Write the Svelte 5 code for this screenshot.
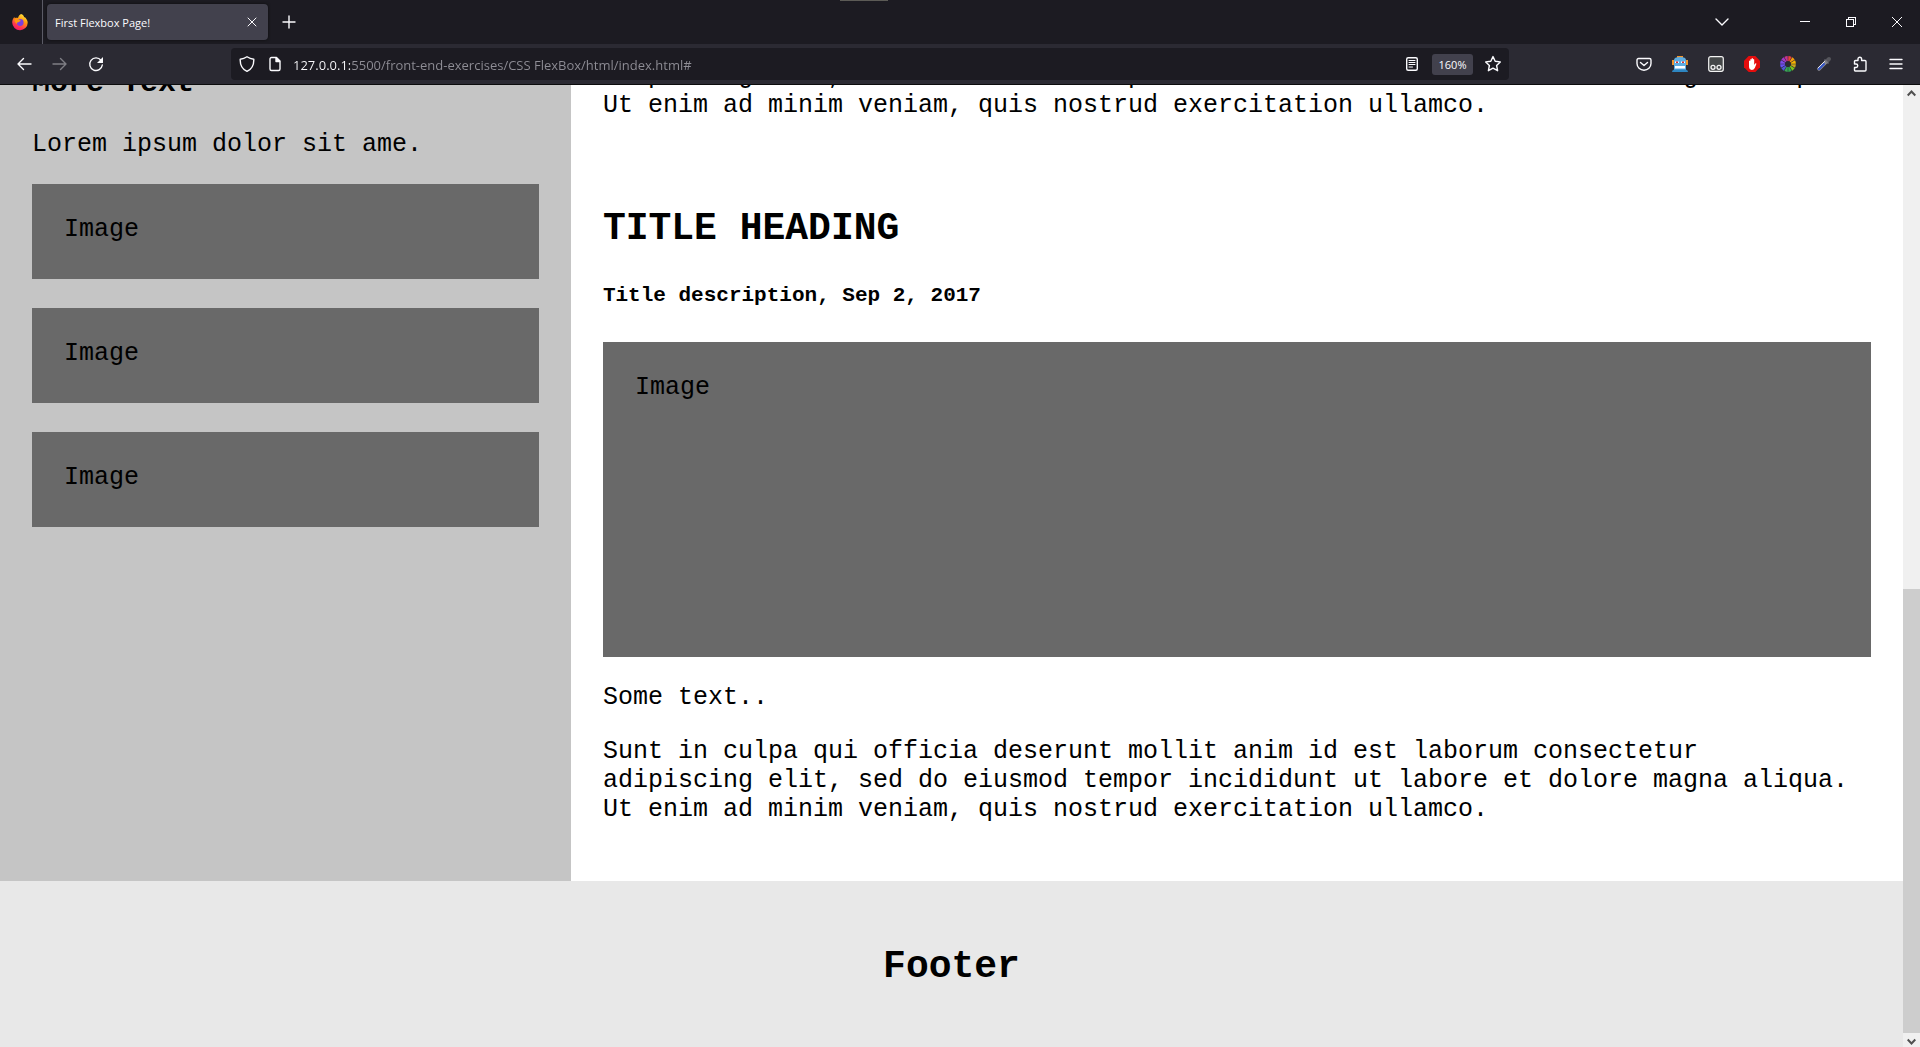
<script>
  let url = $state('127.0.0.1:5500/front-end-exercises/CSS FlexBox/html/index.html#');
  const thumbs = ['Image', 'Image', 'Image'];
  const wheel = ['#e8413c', '#f59b0b', '#f7b500', '#c9a51a', '#7ac51c', '#2fa84f', '#3aa655', '#4f5bd5', '#6a4ff0', '#7d4bea', '#a238c9', '#c8328f'];
</script>

<div class="browser">
  <header class="chrome">
    <div class="tabbar">
      <button class="home" aria-label="Firefox View">
        <svg width="18" height="18" viewBox="0 0 18 18">
          <defs>
            <linearGradient id="fox" x1="0.8" y1="0" x2="0.3" y2="1">
              <stop offset="0" stop-color="#fff044" />
              <stop offset="0.4" stop-color="#ff980e" />
              <stop offset="0.75" stop-color="#ff3750" />
              <stop offset="1" stop-color="#f5156c" />
            </linearGradient>
          </defs>
          <path fill="url(#fox)" d="M10 1c2 .6 2.800 2 3.200 3.200 1-.1 1.500.6 1.800 1.300 1 1.200 1.700 2.600 1.700 4.200A7.600 7.600 0 0 1 9 17.200 7.700 7.700 0 0 1 1.200 9.600C1.200 7.500 2 5.600 3.300 4l.5 1.300C5 4.600 6 4.700 7 5c.4-1.800 1.600-3.200 3-4z" />
          <circle cx="9.200" cy="9.500" r="3.400" fill="#7a3fe0" />
          <path fill="#ff980e" d="M3.600 6.500c1.600-1 3.500-.8 4.800.2L10 8c-1.200 0-1.700 1-2.800 1.200C6 9.300 5.800 10 6.200 11 4.500 10.500 3.500 8.500 3.600 6.500z" />
        </svg>
      </button>
      <div class="tab">
        <span>First Flexbox Page!</span>
        <button aria-label="Close tab">
          <svg width="10" height="10" viewBox="0 0 10 10" class="line"><path d="M1 1l8 8M9 1L1 9" /></svg>
        </button>
      </div>
      <button class="tool" aria-label="New tab">
        <svg width="14" height="14" viewBox="0 0 14 14" class="line bold"><path d="M7 1v12M1 7h12" /></svg>
      </button>
      <div class="notch"></div>
      <button class="tool chevron" aria-label="List all tabs">
        <svg width="14" height="8" viewBox="0 0 14 8" class="line bold"><path d="M1 1l6 6 6-6" /></svg>
      </button>
      <button class="win" aria-label="Minimize">
        <svg width="10" height="10" viewBox="0 0 10 10" class="line crisp"><path d="M0 4.500h10" /></svg>
      </button>
      <button class="win" aria-label="Restore">
        <svg width="10" height="10" viewBox="0 0 10 10" class="line crisp"><path d="M.5 2.500h7v7h-7zM2.500 2V.5h7v7H8" /></svg>
      </button>
      <button class="win" aria-label="Close">
        <svg width="10" height="10" viewBox="0 0 10 10" class="line"><path d="M0 0l10 10M10 0L0 10" /></svg>
      </button>
    </div>

    <nav class="navbar">
      <button class="tool" aria-label="Back">
        <svg width="16" height="16" viewBox="0 0 16 16" class="line bold"><path d="M15 8H2M7.500 2.500L2 8l5.500 5.500" /></svg>
      </button>
      <button class="tool dim" aria-label="Forward">
        <svg width="16" height="16" viewBox="0 0 16 16" class="line bold"><path d="M1 8h13M8.500 2.500L14 8l-5.500 5.500" /></svg>
      </button>
      <button class="tool" aria-label="Reload">
        <svg width="16" height="16" viewBox="0 0 16 16" class="line bold"><path d="M13 4.300A6.300 6.300 0 1 0 14.300 9" /><path fill="#fbfbfe" stroke="none" d="M15 1v5.500a.5.5 0 0 1-.5.5H9z" /></svg>
      </button>
      <div class="spring"></div>
      <div class="urlbar">
        <svg width="16" height="16" viewBox="0 0 16 16" class="line bold"><path d="M8 .8C10 2.200 12 3 14.800 3.200 15 9 13 13 8 15.300 3 13 1 9 1.200 3.200 4 3 6 2.200 8 .8z" /></svg>
        <svg width="16" height="16" viewBox="0 0 16 16" class="line bold"><path d="M9.500 1.500h-5a1.500 1.500 0 0 0-1.500 1.500v10a1.500 1.500 0 0 0 1.500 1.500h7A1.500 1.500 0 0 0 13 13V5z" /><path fill="#fbfbfe" d="M9 2v3.500h3.500z" /></svg>
        <input type="text" aria-label="Address" bind:value={url} />
        <button class="reader" aria-label="Reader view">
          <svg width="14" height="16" viewBox="0 0 14 16" class="line bold"><rect x="1.700" y="1.700" width="10.600" height="12.600" rx="1.500" /><path stroke-width="1" d="M4 4.500h6M4 6.500h6M4 8.500h6M4 11h3.500" /></svg>
        </button>
        <button class="zoom">160%</button>
        <button class="star" aria-label="Bookmark">
          <svg width="18" height="18" viewBox="0 0 18 18" class="line bold"><path d="M9 1.600l2.200 4.700 5.100.6-3.700 3.600 1 5.200L9 13.200l-4.600 2.500 1-5.200L1.700 6.900l5.100-.6z" /></svg>
        </button>
      </div>
      <div class="spring"></div>
      <button class="tool" aria-label="Pocket">
        <svg width="16" height="16" viewBox="0 0 16 16" class="line bold"><path d="M2.500 2.500h11A1.500 1.500 0 0 1 15 4v3.500a7 6.700 0 0 1-14 0V4a1.500 1.500 0 0 1 1.500-1.500zM4.500 6.500L8 9.500l3.500-3" /></svg>
      </button>
      <button class="tool" aria-label="Robot extension">
        <svg width="16" height="16" viewBox="0 0 16 16">
          <path fill="#f0932b" d="M5 0h6v3H5zM0 4h3v5H0zM13 4h3v5h-3z" />
          <path fill="#5dade2" d="M2 4q0-3 6-3t6 3v10H2z" />
          <path fill="#2e86c1" d="M0 16q0-2 2-2.500h12q2 .5 2 2.500z" />
          <path fill="#fff" d="M3 5.500h4v1.500H3zM9 5.500h4v1.500H9zM3 10h10v2.500H3z" />
          <path fill="#d63031" d="M4 5.500h2V7H4zM10 5.500h2V7h-2z" />
        </svg>
      </button>
      <button class="tool" aria-label="Tampermonkey">
        <svg width="16" height="16" viewBox="0 0 16 16" fill="none" stroke="#f4f4f4"><rect x=".7" y=".7" width="14.600" height="14.600" rx="2" fill="#444748" stroke-width="1.200" /><circle cx="5" cy="11.300" r="2" stroke-width="1.300" /><circle cx="11" cy="11.300" r="2" stroke-width="1.300" /></svg>
      </button>
      <button class="tool" aria-label="AdBlock">
        <svg width="16" height="16" viewBox="0 0 16 16"><path fill="#e40d0d" d="M4.700 0h6.600L16 4.700v6.600L11.300 16H4.700L0 11.300V4.700z" /><path fill="#fff" d="M5 5q.7-.8 1.300 0V3.500q.6-.8 1.300 0v-1q.7-.8 1.300 0v1q.7-.8 1.300 0V9l1-1.500q.9-.4 1.300.3L10.800 12q-1 2-3 2Q5 13.500 5 10.500z" /></svg>
      </button>
      <button class="tool" aria-label="Colour wheel">
        <svg width="16" height="16" viewBox="0 0 16 16">
          {#each wheel as color, i}
            <path fill={color} transform="rotate({i * 30 + 15} 8 8)" d="M6.300.3a8 8 0 0 1 3.400 0L8.600 5a3 3 0 0 0-1.200 0z" />
          {/each}
        </svg>
      </button>
      <button class="tool" aria-label="Eyedropper">
        <svg width="16" height="16" viewBox="0 0 16 16" stroke-linecap="round"><path stroke="#8a8a92" stroke-width="3.500" d="M3 13l7-7" /><path stroke="#3555c8" stroke-width="2" d="M3 13l5-5" /><path stroke="#e8e8ee" d="M2 12l6.500-6.500" /><path stroke="#55555c" stroke-width="4" d="M11.500 4.500L13 3" /><path stroke="#77777f" stroke-width="1.500" d="M9 4l3 3" /></svg>
      </button>
      <button class="tool" aria-label="Extensions">
        <svg width="16" height="16" viewBox="0 0 16 16" class="line bold"><path d="M2.500 8V5.500a1 1 0 0 1 1-1H6V3a1.800 1.800 0 0 1 3.600 0v1.500H13a1 1 0 0 1 1 1V14a1 1 0 0 1-1 1H3.500a1 1 0 0 1-1-1v-2.500H4a1.700 1.700 0 0 0 0-3.500z" /></svg>
      </button>
      <button class="tool" aria-label="Menu">
        <svg width="14" height="12" viewBox="0 0 14 12" class="line bold"><path d="M1 1.500h12M1 6h12M1 10.500h12" /></svg>
      </button>
    </nav>
  </header>

  <div class="viewport">
    <div class="document">
      <div class="columns">
        <aside>
          <h3>More Text</h3>
          <p>Lorem ipsum dolor sit ame.</p>
          <div class="stack">
            {#each thumbs as label}
              <div class="image">{label}</div>
            {/each}
          </div>
        </aside>
        <main>
          <p>adipiscing elit, sed do eiusmod tempor incididunt ut labore et dolore magna aliqua.<br />Ut enim ad minim veniam, quis nostrud exercitation ullamco.</p>
          <h2>TITLE HEADING</h2>
          <h5>Title description, Sep 2, 2017</h5>
          <div class="image large">Image</div>
          <p>Some text..</p>
          <p>Sunt in culpa qui officia deserunt mollit anim id est laborum consectetur<br />adipiscing elit, sed do eiusmod tempor incididunt ut labore et dolore magna aliqua.<br />Ut enim ad minim veniam, quis nostrud exercitation ullamco.</p>
        </main>
      </div>
      <footer><h2>Footer</h2></footer>
    </div>
    <div class="scrollbar">
      <div class="arrow"><svg width="9" height="7" viewBox="0 0 9 7"><path d="M.7 5.500l3.800-4 3.800 4" /></svg></div>
      <div class="track"></div>
      <div class="thumb"></div>
      <div class="arrow end"><svg width="9" height="7" viewBox="0 0 9 7"><path d="M.7 1.500l3.800 4 3.800-4" /></svg></div>
    </div>
  </div>
</div>

<style>
  :global(body) { margin: 0; }
  .browser {
    display: flex;
    flex-direction: column;
    height: 100vh;
    overflow: hidden;
    background: #fff;
  }
  .chrome {
    flex: none;
    border-bottom: 1px solid #0c0c0d;
    color: #fbfbfe;
    font-family: "Open Sans", "Noto Sans", sans-serif;
  }
  button {
    display: flex;
    align-items: center;
    justify-content: center;
    padding: 0;
    border: 0;
    background: none;
    color: inherit;
    font: inherit;
  }
  svg { flex: none; display: block; }
  .line { fill: none; stroke: #fbfbfe; stroke-width: 1; stroke-linecap: round; stroke-linejoin: round; }
  .bold { stroke-width: 1.4; }
  .crisp { shape-rendering: crispEdges; stroke-linecap: butt; stroke-linejoin: miter; }

  .tabbar {
    position: relative;
    display: flex;
    align-items: center;
    height: 44px;
    background: #1c1b22;
  }
  .home {
    width: 43px;
    height: 44px;
    padding-right: 2px;
    border-right: 1px solid #5b5b66;
    box-sizing: border-box;
  }
  .tab {
    display: flex;
    align-items: center;
    justify-content: space-between;
    box-sizing: border-box;
    width: 221px;
    height: 36px;
    margin-left: 4px;
    padding: 0 8px;
    border-radius: 4px;
    background: #42414d;
    box-shadow: 0 0 3px #0c0c0d;
    font-size: 11px;
    line-height: 16px;
    white-space: nowrap;
  }
  .tab span { padding-top: 1px; }
  .tab button { width: 16px; height: 16px; }
  .tool { flex: none; width: 36px; height: 36px; }
  .tabbar .tool { margin-left: 3px; }
  .tabbar .chevron { margin-left: auto; margin-right: 42px; }
  .dim { opacity: 0.4; }
  .win { width: 46px; height: 44px; }
  .notch {
    position: absolute;
    top: 0;
    left: 840px;
    width: 48px;
    height: 1px;
    background: #5c5b56;
  }

  .navbar {
    display: flex;
    align-items: center;
    height: 40px;
    padding: 0 6px;
    background: #2b2a33;
  }
  .spring { flex: 117 1 0; }
  .urlbar {
    flex: 1263 1 0;
    display: flex;
    align-items: center;
    box-sizing: border-box;
    height: 32px;
    padding: 0 7px 0 8px;
    border-radius: 4px;
    background: #1c1b22;
  }
  .urlbar svg + svg { margin-left: 12px; }
  input {
    flex: 1;
    min-width: 0;
    height: 24px;
    margin-left: 10px;
    padding: 2px 0 0;
    box-sizing: border-box;
    border: 0;
    outline: 0;
    background: linear-gradient(90deg, #fbfbfe 57px, #8f8e96 57px);
    background-clip: text;
    -webkit-background-clip: text;
    color: transparent;
    font-family: inherit;
    font-size: 13px;
  }
  .reader { width: 28px; height: 28px; }
  .zoom {
    width: 41px;
    height: 21px;
    margin: 0 11px 0 6px;
    border-radius: 3px;
    background: #42414d;
    font-size: 11px;
  }
  .star { width: 18px; height: 18px; }

  .viewport {
    flex: 1;
    min-height: 0;
    display: flex;
    overflow: hidden;
    color: #000;
    font-family: "Liberation Mono", monospace;
    font-size: 25px;
    line-height: 29px;
  }
  .document {
    flex: 1;
    min-width: 0;
    display: flex;
    flex-direction: column;
    justify-content: flex-end;
  }
  .columns { flex: none; display: flex; }
  aside {
    flex: 0 0 30%;
    box-sizing: border-box;
    padding: 4px 32px 32px;
    background: #c5c5c5;
  }
  main { flex: 1; min-width: 0; padding: 0 32px 32px; background: #fff; }
  h2, h3, h5, p { margin: 0; }
  h2 { font-size: 38px; line-height: 43px; }
  h3 { margin-bottom: 30px; font-size: 30px; line-height: 34px; }
  h5 { margin: 34px 0; font-size: 21px; line-height: 24px; }
  p { margin-bottom: 25px; }
  main h2 { margin-top: 87px; }
  main p { white-space: nowrap; }
  .stack { display: flex; flex-direction: column; gap: 29px; }
  .image {
    box-sizing: border-box;
    height: 95px;
    padding: 31px 32px;
    background: #696969;
  }
  .large { height: 315px; margin-bottom: 26px; }
  footer {
    flex: none;
    padding: 64px 32px 59px;
    background: #e8e8e8;
    text-align: center;
  }

  .scrollbar {
    flex: none;
    display: flex;
    flex-direction: column;
    width: 17px;
    background: #f0f0f0;
  }
  .arrow {
    flex: none;
    display: flex;
    align-items: center;
    justify-content: center;
    height: 17px;
  }
  .end { height: 14px; padding-top: 3px; box-sizing: border-box; }
  .arrow path { fill: none; stroke: #505050; stroke-width: 2; }
  .track { flex: 487; }
  .thumb { flex: 444; background: #cdcdcd; }
</style>
